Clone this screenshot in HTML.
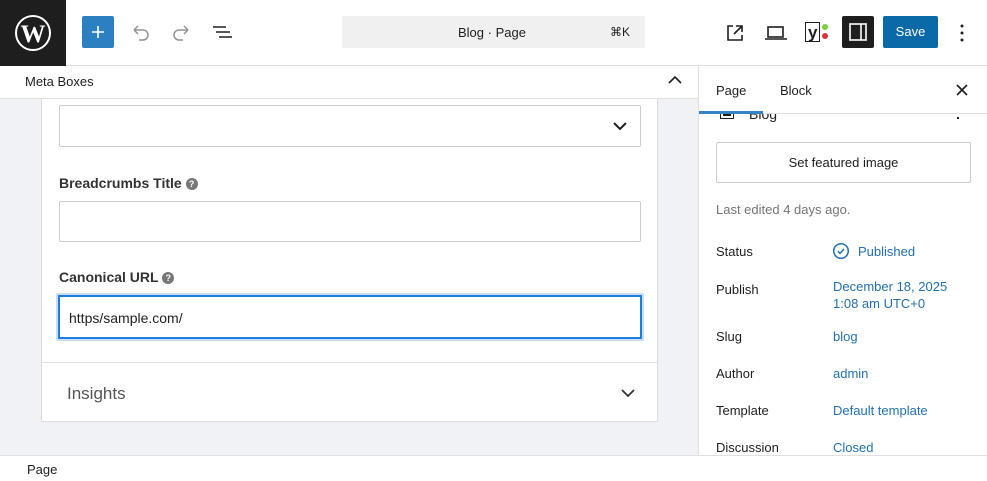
<!DOCTYPE html>
<html><head><meta charset="utf-8"><style>
*{box-sizing:border-box;margin:0;padding:0}
body{width:987px;height:481px;overflow:hidden;position:relative;font-family:"Liberation Sans",Arial,sans-serif;font-size:13px;color:#1e1e1e;background:#fff}
.a{position:absolute}
.t{position:absolute;white-space:nowrap;line-height:1}
.blue{color:#2271b1}
</style></head><body>
<!-- top bar -->
<div class="a" style="left:0;top:0;width:987px;height:66px;border-bottom:1px solid #e0e0e0;background:#fff"></div>
<div class="a" style="left:0;top:0;width:66px;height:66px;background:#1e1e1e"></div>
<svg class="a" style="left:13px;top:13px" width="40" height="40" viewBox="0 0 40 40"><circle cx="20" cy="20" r="17" fill="none" stroke="#fff" stroke-width="2"/><text x="20" y="29" text-anchor="middle" font-family="Liberation Serif,serif" font-weight="bold" font-size="25" fill="#fff">W</text></svg>
<div class="a" style="left:82px;top:16px;width:32px;height:32px;background:#2c7fc0;border-radius:2px"></div>
<svg class="a" style="left:82px;top:16px" width="32" height="32"><path d="M16 10v12M10 16h12" stroke="#fff" stroke-width="1.6"/></svg>
<svg class="a" style="left:128px;top:22px" width="24" height="20"><path d="M6 8h9a5 5 0 0 1 0 10h-4M6 8l4-4M6 8l4 4" stroke="#949494" stroke-width="1.5" fill="none"/></svg>
<svg class="a" style="left:170px;top:22px" width="24" height="20"><path d="M18 8H9a5 5 0 0 0 0 10h4M18 8l-4-4M18 8l-4 4" stroke="#949494" stroke-width="1.5" fill="none"/></svg>
<svg class="a" style="left:210px;top:22px" width="24" height="20"><path d="M3 5h13M6 10h14M9 15h13" stroke="#1e1e1e" stroke-width="1.6"/></svg>
<div class="a" style="left:342px;top:16px;width:303px;height:32px;background:#f0f0f0;border-radius:2px"></div>
<div class="t" style="left:458px;top:26px;font-size:13px">Blog · Page</div>
<div class="t" style="left:610px;top:26px;font-size:12px">⌘K</div>
<svg class="a" style="left:724px;top:22px" width="22" height="22"><path d="M9 4H4v14h14v-5M12 4h6v6M18 4l-8 8" stroke="#1e1e1e" stroke-width="1.6" fill="none"/></svg>
<svg class="a" style="left:764px;top:22px" width="24" height="22"><rect x="4" y="5" width="15" height="10" fill="none" stroke="#1e1e1e" stroke-width="1.6"/><path d="M1 17h22" stroke="#1e1e1e" stroke-width="1.6"/></svg>
<div class="t" style="left:805px;top:22px;font-size:17px;font-weight:bold;border:1px solid #1e1e1e;padding:1px 2px;height:20px;line-height:17px">y</div>
<div class="a" style="left:822px;top:24px;width:6px;height:6px;border-radius:50%;background:#7ad03a"></div>
<div class="a" style="left:822px;top:33px;width:6px;height:6px;border-radius:50%;background:#dc3232"></div>
<div class="a" style="left:842px;top:16px;width:32px;height:32px;background:#1e1e1e;border-radius:2px"></div>
<svg class="a" style="left:842px;top:16px" width="32" height="32"><rect x="8" y="8" width="16" height="16" fill="none" stroke="#fff" stroke-width="1.6"/><path d="M19 8v16" stroke="#fff" stroke-width="1.6"/></svg>
<div class="a" style="left:883px;top:16px;width:55px;height:32px;background:#0a6aa8;border-radius:2px;color:#fff;font-size:13px;text-align:center;line-height:32px">Save</div>
<svg class="a" style="left:955px;top:22px" width="14" height="22"><circle cx="7" cy="4" r="1.5" fill="#1e1e1e"/><circle cx="7" cy="11" r="1.5" fill="#1e1e1e"/><circle cx="7" cy="18" r="1.5" fill="#1e1e1e"/></svg>

<!-- left area -->
<div class="a" style="left:0;top:66px;width:698px;height:33px;background:#fff;border-bottom:1px solid #e0e0e0"></div>
<div class="t" style="left:25px;top:75px;font-size:13px">Meta Boxes</div>
<svg class="a" style="left:667px;top:74px" width="16" height="12"><path d="M2 9l6-6 6 6" stroke="#1e1e1e" stroke-width="1.6" fill="none"/></svg>
<div class="a" style="left:0;top:99px;width:698px;height:357px;background:#f0f2f6"></div>
<div class="a" style="left:41px;top:99px;width:617px;height:323px;background:#fff;border:1px solid #dcdcde;border-top:none"></div>
<div class="a" style="left:59px;top:105px;width:582px;height:42px;border:1px solid #ccc;border-radius:2px"></div>
<svg class="a" style="left:612px;top:120px" width="16" height="12"><path d="M2 3l6 6 6-6" stroke="#1e1e1e" stroke-width="2" fill="none"/></svg>
<div class="t" style="left:59px;top:176px;font-size:14px;font-weight:bold;color:#333">Breadcrumbs Title <span style="display:inline-block;width:12px;height:12px;border-radius:50%;background:#777;color:#fff;font-size:9px;text-align:center;line-height:12px;vertical-align:1px">?</span></div>
<div class="a" style="left:59px;top:201px;width:582px;height:41px;border:1px solid #ccc;border-radius:2px"></div>
<div class="t" style="left:59px;top:270px;font-size:14px;font-weight:bold;color:#333">Canonical URL <span style="display:inline-block;width:12px;height:12px;border-radius:50%;background:#777;color:#fff;font-size:9px;text-align:center;line-height:12px;vertical-align:1px">?</span></div>
<div class="a" style="left:56px;top:293px;width:588px;height:48px;background:#c7def5;border-radius:2px"></div>
<div class="a" style="left:58px;top:295px;width:584px;height:44px;border:2px solid #1e7ee0;background:#fff"></div>
<div class="t" style="left:69px;top:311px;font-size:14px;color:#222">https/sample.com/</div>
<div class="a" style="left:42px;top:362px;width:615px;height:1px;background:#e0e0e0"></div>
<div class="t" style="left:67px;top:385px;font-size:17px;color:#555">Insights</div>
<svg class="a" style="left:620px;top:387px" width="16" height="12"><path d="M2 3l6 6 6-6" stroke="#333" stroke-width="1.8" fill="none"/></svg>

<!-- footer -->
<div class="a" style="left:0;top:455px;width:987px;height:26px;background:#fff;border-top:1px solid #e0e0e0"></div>
<div class="t" style="left:27px;top:463px;font-size:13px">Page</div>

<!-- sidebar -->
<div class="a" style="left:698px;top:66px;width:289px;height:389px;background:#fff;border-left:1px solid #e0e0e0"></div>
<div class="a" style="left:699px;top:114px;width:288px;height:12px;overflow:hidden">
  <div class="t" style="left:50px;top:-7px;font-size:14px">Blog</div>
  <div class="a" style="left:21px;top:-4px;width:14px;height:9px;border:1.5px solid #1e1e1e;border-top:none"></div>
  <div class="a" style="left:24px;top:0px;width:8px;height:1.5px;background:#1e1e1e"></div>
  <div class="a" style="left:258px;top:3px;width:2px;height:2px;background:#1e1e1e"></div>
</div>
<div class="a" style="left:699px;top:113px;width:288px;height:1px;background:#e0e0e0"></div>
<div class="a" style="left:699px;top:111px;width:64px;height:3px;background:#3582c4"></div>
<div class="t" style="left:716px;top:84px;font-size:13px">Page</div>
<div class="t" style="left:780px;top:84px;font-size:13px">Block</div>
<svg class="a" style="left:954px;top:82px" width="16" height="16"><path d="M3 3l10 10M13 3L3 13" stroke="#1e1e1e" stroke-width="1.6"/></svg>
<div class="a" style="left:716px;top:142px;width:255px;height:41px;border:1px solid #ccc;border-radius:2px;font-size:13px;text-align:center;line-height:39px">Set featured image</div>
<div class="t" style="left:716px;top:203px;font-size:13px;color:#757575">Last edited 4 days ago.</div>
<div class="t" style="left:716px;top:245px">Status</div>
<svg class="a" style="left:832px;top:242px" width="18" height="18"><circle cx="9" cy="9" r="7.3" fill="none" stroke="#2271b1" stroke-width="1.5"/><path d="M5.8 9.2l2.2 2.2 4-4.4" stroke="#2271b1" stroke-width="1.5" fill="none"/></svg>
<div class="t blue" style="left:858px;top:245px">Published</div>
<div class="t" style="left:716px;top:283px">Publish</div>
<div class="t blue" style="left:833px;top:280px">December 18, 2025</div>
<div class="t blue" style="left:833px;top:297px">1:08 am UTC+0</div>
<div class="t" style="left:716px;top:330px">Slug</div>
<div class="t blue" style="left:833px;top:330px">blog</div>
<div class="t" style="left:716px;top:367px">Author</div>
<div class="t blue" style="left:833px;top:367px">admin</div>
<div class="t" style="left:716px;top:404px">Template</div>
<div class="t blue" style="left:833px;top:404px">Default template</div>
<div class="t" style="left:716px;top:441px">Discussion</div>
<div class="t blue" style="left:833px;top:441px">Closed</div>
</body></html>
